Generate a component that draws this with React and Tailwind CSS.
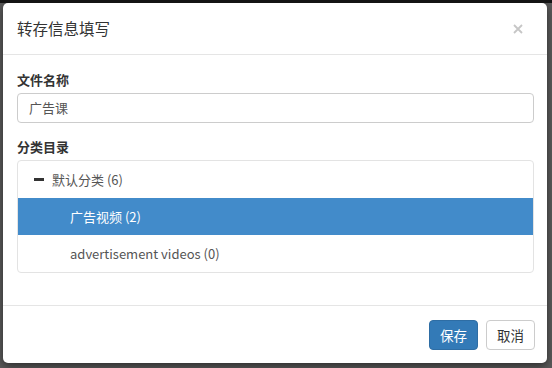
import React from "react";

const font = { fontFamily: '"Noto Sans CJK SC", "Noto Sans", sans-serif' };

const TreeRow = ({ label, depth, active, icon }) => (
  <div
    className={
      "h-[37px] flex items-center text-[13px] " +
      (active ? "bg-[#428bca] text-white" : "text-[#555]") +
      (depth === 0 ? " pl-[16px]" : " pl-[52px]")
    }
  >
    {icon && <span className="w-[10px] h-[3px] bg-[#333] mr-[8px]"></span>}
    <span>{label}</span>
  </div>
);

export default function App() {
  return (
    <div
      className="w-[552px] h-[368px] bg-[#5a5a5a] border-t-[3px] border-[#141414] pl-[3px] overflow-hidden"
      style={font}
    >
      <div className="w-[544px] h-[360px] bg-white rounded-[5px] flex flex-col shadow-[0_3px_9px_rgba(0,0,0,0.5)]">
        {/* header */}
        <div className="h-[52px] flex items-center justify-between pl-[14px] pr-[24px] border-b border-[#e5e5e5]">
          <div className="text-[15.5px] text-[#333]">转存信息填写</div>
          <svg width="10" height="10" viewBox="0 0 10 10" className="mt-[1px]">
            <path d="M1 1L9 9M9 1L1 9" stroke="#c6c6c6" strokeWidth="1.8" />
          </svg>
        </div>

        {/* body */}
        <div className="flex-1 pl-[14px] pr-[13px] pt-[15px]">
          <div className="text-[13px] font-bold text-[#333] leading-[20px] mb-[3px]">文件名称</div>
          <div className="h-[30px] border border-[#ccc] rounded-[4px] flex items-center px-[11px] text-[13px] text-[#555]">
            广告课
          </div>
          <div className="text-[13px] font-bold text-[#333] leading-[20px] mt-[14px] mb-[3px]">分类目录</div>
          <div className="border border-[#e3e3e3] rounded-[4px] overflow-hidden">
            <TreeRow label="默认分类 (6)" depth={0} icon />
            <TreeRow label="广告视频 (2)" depth={1} active />
            <TreeRow label="advertisement videos (0)" depth={1} />
          </div>
        </div>

        {/* footer */}
        <div className="h-[58px] border-t border-[#e5e5e5] flex items-start justify-end gap-[8px] pr-[12px] pt-[14px]">
          <button className="w-[49px] h-[30px] rounded-[4px] bg-[#337ab7] border border-[#2e6da4] text-white text-[13.5px]">
            保存
          </button>
          <button className="w-[49px] h-[30px] rounded-[4px] bg-white border border-[#ccc] text-[#333] text-[13.5px]">
            取消
          </button>
        </div>
      </div>
    </div>
  );
}
